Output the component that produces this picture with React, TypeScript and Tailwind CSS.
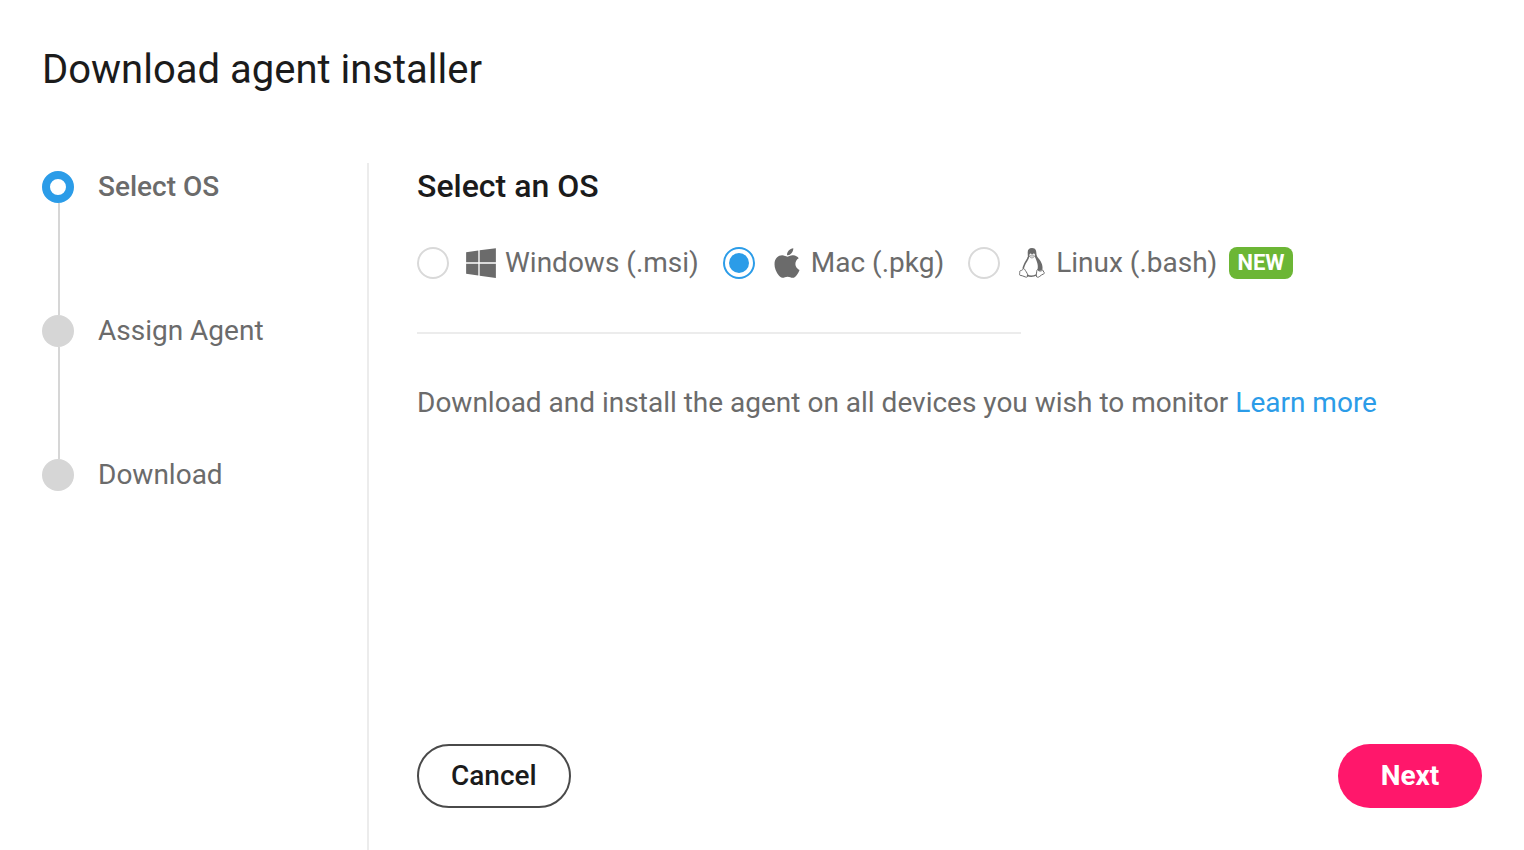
import { useState } from "react";
import type { ReactNode } from "react";
import { FaApple, FaWindows } from "react-icons/fa";

const STEPS = ["Select OS", "Assign Agent", "Download"];

type Os = { id: string; label: string; icon: ReactNode; isNew?: boolean };

function Penguin() {
  return (
    <svg viewBox="0 0 26 30" className="h-[30px] w-[26px] shrink-0" fill="none" stroke="currentColor" aria-hidden="true">
      {/* head and right flank */}
      <path
        d="M13 0C10 0 8.700 1.800 8.700 4.400c0 2.200.3 4 0 6l1.900-1.600c-.4-1.800 0-3 1-3.200.8-.1 1.100.8 1.500.8.500 0 .9-1.100 1.900-.8 1 .3 1.300 1.800.8 3.200 1 2 2 4.500 2.600 6.700.6 2.300.5 4.500 0 6.200 1.500 1.400 4.100 1.200 5-.5.5-2.600-.4-5.600-1.900-8.200-1.500-2.600-3.800-4.100-4-6.600C17.300 3.500 17.200 0 13 0Z"
        fill="currentColor"
        stroke="none"
      />
      {/* beak */}
      <path d="M10.500 8.300c1-1 1.700-1.400 2.600-1.400s1.800.5 2.700 1.100c-1 1.300-2 2-3 2s-1.700-.7-2.300-1.700Z" fill="currentColor" fillOpacity="0.300" strokeWidth="0.500" />
      <path d="M9.400 9.200c-.5 2.500-2.600 4.300-3.500 6.600-.6 1.500-1.600 3-1.700 4.900M8 27.300c3 1.300 6.500 1.100 9.500-.4" strokeWidth="1.600" />
      {/* feet */}
      <path d="M4.300 20.700c-.7 1.200-1.400 1.700-2.700 1.900-1.300.3-.7 1.500-.9 2.600-.2 1-.6 1.700.3 2 1.800.6 3.800.8 5.200 1.700 1.600.9 3-.4 2.600-2-.7-2.100-2.400-4.300-3.200-5.600-.4-.6-.8-.9-1.300-.6Z" strokeWidth="1" />
      <path d="M18.500 21.700c-.8.400-.8 1.300-.8 2.300 0 1.500-.8 2.700-.5 4 .4 1.600 2.400 1.500 3.500.4 1.200-1.200 2.500-1.800 3.900-2.500 1-.5 1.100-1 .3-1.700-.8-.7-.7-1.700-1.300-2.300-1.300 1.500-3.600 1.700-5.100-.2Z" strokeWidth="1" />
    </svg>
  );
}

const OS_LIST: Os[] = [
  { id: "windows", label: "Windows (.msi)", icon: <FaWindows className="size-[34px] shrink-0" /> },
  { id: "mac", label: "Mac (.pkg)", icon: <FaApple className="size-[34px] shrink-0" /> },
  { id: "linux", label: "Linux (.bash)", icon: <Penguin />, isNew: true },
];

function Stepper({ current }: { current: number }) {
  return (
    <ol className="w-[325px] shrink-0 pt-2">
      {STEPS.map((step, i) => (
        <li key={step} className="flex gap-6" aria-current={i === current ? "step" : undefined}>
          <div className="flex flex-col">
            <span
              className={
                i === current
                  ? "size-8 rounded-full border-8 border-[#2b9ce8] bg-white"
                  : "size-8 rounded-full bg-[#d6d6d6]"
              }
            />
            {i < STEPS.length - 1 && <span className="ml-4 h-28 w-[2px] bg-[#d6d6d6]" />}
          </div>
          <span className={i === current ? "h-8 text-[28px] leading-8 font-medium" : "h-8 text-[28px] leading-8"}>
            {step}
          </span>
        </li>
      ))}
    </ol>
  );
}

export default function App() {
  const [os, setOs] = useState("mac");

  return (
    <div className="flex min-h-screen flex-col bg-white pl-[42px] font-['Roboto',sans-serif] text-[#6b6b6b]">
      <h1 className="pt-11 text-[40px] leading-[52px] text-[#1b1b1b]">Download agent installer</h1>

      <div className="mt-[67px] flex grow">
        <Stepper current={0} />

        <main className="flex grow flex-col border-l-2 border-[#ececec] pr-[42px] pb-[42px] pl-12">
          <h2 className="pt-1 text-[32px] leading-[38px] font-medium text-[#1b1b1b]">Select an OS</h2>

          <fieldset className="mt-[42px] flex items-center gap-6" aria-label="Operating system">
            {OS_LIST.map(({ id, label, icon, isNew }) => (
              <div key={id} className="flex items-center">
                <input
                  type="radio"
                  id={id}
                  name="os"
                  checked={os === id}
                  onChange={() => setOs(id)}
                  className="size-8 appearance-none rounded-full border-2 border-[#d9d9d9] bg-white p-1 checked:border-[#2b9ce8] checked:bg-[#2b9ce8] checked:bg-clip-content"
                />
                <label htmlFor={id} className="flex h-8 items-center pl-4 text-[28px] leading-8 whitespace-nowrap">
                  <span className="mr-2 flex w-8 justify-center">{icon}</span>
                  {label}
                </label>
                {isNew && (
                  <span className="ml-3 h-8 rounded-lg bg-[#6cb635] px-2 text-[22px] leading-8 font-bold text-white">
                    NEW
                  </span>
                )}
              </div>
            ))}
          </fieldset>

          <hr className="mt-[53px] w-[604px] border-t-2 border-[#ececec]" />

          <p className="mt-[52px] text-[28px] leading-[34px]">
            Download and install the agent on all devices you wish to monitor{" "}
            <a href="#learn-more" className="text-[#2b9ce8]">
              Learn more
            </a>
          </p>

          <div className="mt-auto flex justify-between">
            <button
              type="button"
              className="h-16 rounded-full border-2 border-[#4a4a4a] px-8 text-[28px] leading-8 font-medium text-[#1b1b1b]"
            >
              Cancel
            </button>
            <button type="button" className="h-16 min-w-36 rounded-full bg-[#ff176b] px-10 text-[28px] leading-8 font-bold text-white">
              Next
            </button>
          </div>
        </main>
      </div>
    </div>
  );
}
